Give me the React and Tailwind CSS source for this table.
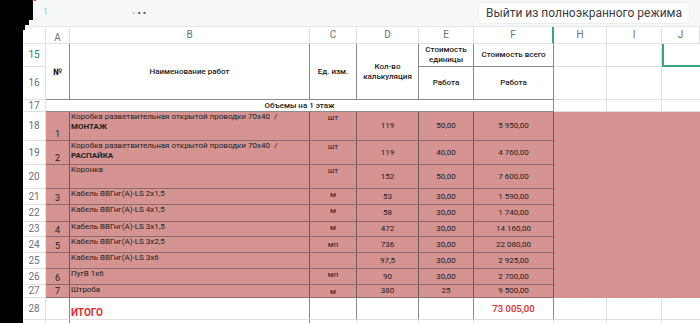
import React from 'react'

const light = 'border-[#e0e0e0]'
const dark = 'border-[#8a8a8a]'
const pinkLine = 'border-r-[#6f5b5b] border-b-[#8f6a6a]'
const pink = 'bg-[#d59392]'

const rows = [
    { n: 18, a: '1', b: <>Коробка разветвительная открытой проводки 70х40&nbsp; /<br /><span className="font-bold">МОНТАЖ</span></>, c: 'шт', d: '119', e: '50,00', f: '5 950,00' },
    { n: 19, a: '2', b: <>Коробка разветвительная открытой проводки 70х40&nbsp; /<br /><span className="font-bold">РАСПАЙКА</span></>, c: 'шт', d: '119', e: '40,00', f: '4 760,00' },
    { n: 20, a: '', b: 'Коронка', c: 'шт', d: '152', e: '50,00', f: '7 600,00' },
    { n: 21, a: '3', b: 'Кабель ВВГнг(А)-LS 2х1,5', c: 'м', d: '53', e: '30,00', f: '1 590,00' },
    { n: 22, a: '', b: 'Кабель ВВГнг(А)-LS 4х1,5', c: 'м', d: '58', e: '30,00', f: '1 740,00' },
    { n: 23, a: '4', b: 'Кабель ВВГнг(А)-LS 3х1,5', c: 'м', d: '472', e: '30,00', f: '14 160,00' },
    { n: 24, a: '5', b: 'Кабель ВВГнг(А)-LS 3х2,5', c: 'мп', cAlign: 'items-center', d: '736', e: '30,00', f: '22 080,00' },
    { n: 25, a: '', b: 'Кабель ВВГнг(А)-LS 3х6', c: '', d: '97,5', e: '30,00', f: '2 925,00' },
    { n: 26, a: '6', b: 'ПугВ 1х6', c: 'мп', d: '90', e: '30,00', f: '2 700,00' },
    { n: 27, a: '7', b: 'Штроба', c: 'м', cAlign: 'items-end', d: '380', e: '25', f: '9 500,00' },
]

const RowNum = ({ n, green }) => (
    <div className={`flex items-center justify-center border-r border-b ${light} text-[10px] ${green ? 'text-[#1e8e5e]' : 'text-[#6b6f73]'}`}>
        {n}
    </div>
)

const Letter = ({ children, className = '' }) => (
    <div className={`flex items-center justify-center border-r border-b ${light} text-[10px] text-[#6b6f73] ${className}`}>
        {children}
    </div>
)

const App = () => {
    return (
        <div className="relative w-[700px] h-[323px] overflow-hidden bg-black flex font-['Roboto',sans-serif] text-[#222]">
            <div className="w-[23px] shrink-0 bg-black"></div>

            <div className="flex-1 flex flex-col bg-white">
                {/* top bar */}
                <div className="h-[27px] shrink-0 bg-[#f6f7f8] border-b border-[#e8e8e8] flex items-center">
                    <span className="ml-[20px] text-[9px] text-[#9cc9b4]">1</span>
                    <span className="ml-[84px] text-[10px] tracking-[2px] text-[#555]"><span className="text-[#ccc]">•</span>••</span>
                    <div className="ml-auto mr-[10px] h-[22px] px-[7px] flex items-center rounded-[5px] bg-white border border-[#ececec] text-[12px] text-[#3c4043]">
                        Выйти из полноэкранного режима
                    </div>
                </div>

                <div className="grid grid-cols-[23px_24px_240px_47px_62px_55px_80px_53px_55px_38px] grid-rows-[17px_23px_33px_12px_29px_24px_24px_16px_17px_15px_16px_16px_16px_13px_22px_20px] text-[8px] leading-[10px]">
                    {/* column letters */}
                    <div className={`border-r border-b ${light}`}></div>
                    <Letter className="pt-[6px] text-[8px]">A</Letter>
                    <Letter>B</Letter>
                    <Letter>C</Letter>
                    <Letter>D</Letter>
                    <Letter>E</Letter>
                    <Letter className="border-r-2 border-r-[#3aa57a]">F</Letter>
                    <Letter>H</Letter>
                    <Letter>I</Letter>
                    <Letter className="text-[#1e8e5e]">J</Letter>

                    {/* rows 15-16 header */}
                    <RowNum n={15} green />
                    <div className={`row-span-2 flex items-center justify-center border-r border-b ${dark} font-bold text-[9px]`}>№</div>
                    <div className={`row-span-2 flex items-center justify-center border-r border-b ${dark} font-medium`}>Наименование работ</div>
                    <div className={`row-span-2 flex items-center justify-center border-r border-b ${dark} font-medium`}>Ед. изм.</div>
                    <div className={`row-span-2 flex items-center justify-center text-center border-r border-b ${dark} font-medium`}>Кол-во<br />калькуляция</div>
                    <div className={`flex items-center justify-center text-center border-r border-b ${dark} font-medium`}>Стоимость<br />единицы</div>
                    <div className={`flex items-center justify-center border-r border-b ${dark} font-medium`}>Стоимость всего</div>
                    <div className={`border-r border-b ${light}`}></div>
                    <div className={`border-r border-b ${light}`}></div>
                    <div className="border-l-2 border-b-2 border-[#3aa57a]"></div>

                    <RowNum n={16} />
                    <div className={`flex items-center justify-center border-r border-b ${dark} font-medium`}>Работа</div>
                    <div className={`flex items-center justify-center border-r border-b ${dark} font-medium`}>Работа</div>
                    <div className={`border-r border-b ${light}`}></div>
                    <div className={`border-r border-b ${light}`}></div>
                    <div className={`border-b ${light}`}></div>

                    {/* row 17 */}
                    <RowNum n={17} />
                    <div className={`col-span-6 flex items-center justify-center border-r border-b ${dark} font-medium`}>Объемы на 1 этаж</div>
                    <div className={`border-r border-b ${light}`}></div>
                    <div className={`border-r border-b ${light}`}></div>
                    <div className={`border-b ${light}`}></div>

                    {/* pink rows */}
                    {rows.map((r, i) => (
                        <React.Fragment key={r.n}>
                            <RowNum n={r.n} />
                            <div className={`${pink} flex items-end justify-center pb-[1px] border-r border-b ${pinkLine} text-[9px]`}>{r.a}</div>
                            <div className={`${pink} pl-[1px] border-r border-b ${pinkLine}`}>{r.b}</div>
                            <div className={`${pink} flex justify-center ${r.cAlign || 'items-start'} pt-[1px] border-r border-b ${pinkLine}`}>{r.c}</div>
                            <div className={`${pink} flex items-center justify-center border-r border-b ${pinkLine}`}>{r.d}</div>
                            <div className={`${pink} flex items-center justify-center border-r border-b ${pinkLine}`}>{r.e}</div>
                            <div className={`${pink} flex items-center justify-center border-r border-b ${pinkLine}`}>{r.f}</div>
                            {i === 0 && <div className={`${pink} col-span-3 row-span-10`}></div>}
                        </React.Fragment>
                    ))}

                    {/* row 28 total */}
                    <RowNum n={28} />
                    <div className={`border-r border-b ${dark} border-b-[#e0e0e0]`}></div>
                    <div className={`flex items-end pl-[1px] pb-[1px] border-r border-b ${dark} border-b-[#e0e0e0] text-[10px] font-bold text-[#e02b2b]`}>ИТОГО</div>
                    <div className={`border-r border-b ${dark} border-b-[#e0e0e0]`}></div>
                    <div className={`border-r border-b ${dark} border-b-[#e0e0e0]`}></div>
                    <div className={`border-r border-b ${dark} border-b-[#e0e0e0]`}></div>
                    <div className={`flex items-center justify-center border-r border-b ${dark} border-b-[#e0e0e0] text-[9.5px] font-medium text-[#e02b2b]`}>73 005,00</div>
                    <div className={`border-r border-b ${light}`}></div>
                    <div className={`border-r border-b ${light}`}></div>
                    <div className={`border-b ${light}`}></div>

                    {/* row 29, only its top edge shows */}
                    <div className={`border-r ${light}`}></div>
                    <div className={`border-r ${dark}`}></div>
                    <div className={`border-r ${dark}`}></div>
                    <div className={`border-r ${light}`}></div>
                    <div className={`border-r ${light}`}></div>
                    <div className={`border-r ${light}`}></div>
                    <div className={`border-r ${light}`}></div>
                    <div className={`border-r ${light}`}></div>
                    <div className={`border-r ${light}`}></div>
                    <div></div>
                </div>
            </div>

            {/* black corner of the captured screen */}
            <div className="absolute left-0 top-0 w-[33px] h-[20px] bg-black"></div>
            <div className="absolute left-0 top-[20px] w-[29px] h-[5px] bg-black"></div>
            <div className="absolute left-0 top-[25px] w-[25px] h-[5px] bg-black"></div>
            <div className="absolute left-[34px] top-0 w-[2px] h-[1px] bg-[#d33]"></div>
        </div>
    )
}

export default App
